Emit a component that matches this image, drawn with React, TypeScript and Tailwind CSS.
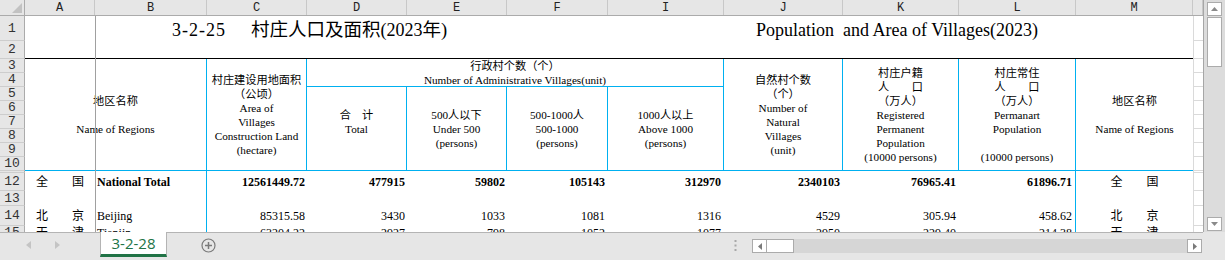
import React from "react";

const cols =
  "grid grid-cols-[25px_70px_112px_100px_100px_100px_101px_116px_119px_116px_117px_117px_10px]";
const serif = "font-['Liberation_Serif','Noto_Sans_CJK_SC',serif]";
const mono = "font-['Liberation_Mono','Noto_Sans_CJK_SC',monospace]";

function RowNum({ n, className = "" }: { n?: string; className?: string }) {
  return (
    <div
      className={`flex items-center justify-center bg-[#e6e6e6] border-r border-b border-r-[#ababab] border-b-[#cdcdcd] ${mono} text-[13px] leading-none text-[#333] overflow-hidden ${className}`}
    >
      {n}
    </div>
  );
}

function NCell({ className = "" }: { className?: string }) {
  return <div className={`border-l border-b border-[#dadada] ${className}`} />;
}

function Lines({ items }: { items: string[] }) {
  return (
    <>
      {items.map((t, i) => (
        <div key={i} className="h-[14px] leading-[14px] whitespace-pre">
          {t}
        </div>
      ))}
    </>
  );
}

const letters = ["A", "B", "C", "D", "E", "F", "I", "J", "K", "L", "M", ""];

function ColumnHeader() {
  return (
    <div className={`${cols} h-[16px] bg-[#e6e6e6] border-b border-[#ababab]`}>
      <div className="flex items-end justify-end pr-[2px] pb-[2px] border-r border-[#ababab]">
        <svg width="10" height="10">
          <polygon points="10,0 10,10 0,10" fill="#c2c2c2" />
        </svg>
      </div>
      {letters.map((l, i) => (
        <div
          key={i}
          className={`flex items-center justify-center border-r border-[#c8c8c8] ${mono} text-[12px] leading-none text-[#222]`}
        >
          {l}
        </div>
      ))}
    </div>
  );
}

function TitleRows() {
  return (
    <div className={`${cols} grid-rows-[25px_18px]`}>
      <RowNum n="1" className="col-start-1 row-start-1" />
      <RowNum n="2" className="col-start-1 row-start-2" />
      <div className="col-start-2 row-start-1 row-span-2 border-b border-black" />
      <div className="col-start-3 col-span-6 row-start-1 row-span-2 border-b border-black pl-[77px] pt-[3px] whitespace-nowrap flex items-baseline leading-[22px] text-black">
        <span className="font-['Liberation_Serif',serif] text-[18px] tracking-[1px]">3-2-25</span>
        <span className={`${serif} text-[18.5px] ml-[25px]`}>村庄人口及面积</span>
        <span className={`${serif} text-[18px]`}>(2023</span>
        <span className={`${serif} text-[18.5px]`}>年)</span>
      </div>
      <div className="col-start-9 col-span-4 row-start-1 row-span-2 border-b border-black pl-[32px] pt-[3px] whitespace-pre font-['Liberation_Serif',serif] text-[18px] leading-[22px] text-black">
        Population  and Area of Villages(2023)
      </div>
      <NCell className="col-start-13 row-start-1" />
      <NCell className="col-start-13 row-start-2" />
    </div>
  );
}

const hc = `flex flex-col items-center justify-center text-center ${serif} text-[11.2px] text-black border-b border-[#00b0f0]`;

function HeaderRows() {
  const nums = ["3", "4", "5", "6", "7", "8", "9", "10"];
  const rowStarts = [
    "row-start-1",
    "row-start-2",
    "row-start-3",
    "row-start-4",
    "row-start-5",
    "row-start-6",
    "row-start-7",
    "row-start-8",
  ];
  return (
    <div className={`${cols} grid-rows-[repeat(8,14px)]`}>
      {nums.map((n, i) => (
        <RowNum key={n} n={n} className={`col-start-1 ${rowStarts[i]}`} />
      ))}
      <div className={`${hc} col-start-2 col-span-2 row-start-1 row-span-8 border-r border-r-[#00b0f0]`}>
        <Lines items={["地区名称", "", "Name of Regions"]} />
      </div>
      <div className={`${hc} col-start-4 row-start-1 row-span-8 border-r border-r-[#00b0f0]`}>
        <Lines items={["村庄建设用地面积", "（公顷）", "Area of", "Villages", "Construction Land", "(hectare)"]} />
      </div>
      <div className={`${hc} col-start-5 col-span-4 row-start-1 row-span-2 border-r border-r-[#00b0f0]`}>
        <Lines items={["行政村个数（个）", "Number of Administrative Villages(unit)"]} />
      </div>
      <div className={`${hc} col-start-5 row-start-3 row-span-6 border-r border-r-[#00b0f0]`}>
        <Lines items={["合　计", "Total", ""]} />
      </div>
      <div className={`${hc} col-start-6 row-start-3 row-span-6 border-r border-r-[#00b0f0]`}>
        <Lines items={["500人以下", "Under 500", "(persons)"]} />
      </div>
      <div className={`${hc} col-start-7 row-start-3 row-span-6 border-r border-r-[#00b0f0]`}>
        <Lines items={["500-1000人", "500-1000", "(persons)"]} />
      </div>
      <div className={`${hc} col-start-8 row-start-3 row-span-6 border-r border-r-[#00b0f0]`}>
        <Lines items={["1000人以上", "Above 1000", "(persons)"]} />
      </div>
      <div className={`${hc} col-start-9 row-start-1 row-span-8 border-r border-r-[#00b0f0]`}>
        <Lines items={["自然村个数", "（个）", "Number of", "Natural", "Villages", "(unit)"]} />
      </div>
      <div className={`${hc} col-start-10 row-start-1 row-span-8 border-r border-r-[#00b0f0]`}>
        <Lines items={["村庄户籍", "人　　口", "（万人）", "Registered", "Permanent", "Population", "(10000 persons)"]} />
      </div>
      <div className={`${hc} col-start-11 row-start-1 row-span-8 border-r border-r-[#00b0f0]`}>
        <Lines items={["村庄常住", "人　　口", "（万人）", "Permanart", "Population", "", "(10000 persons)"]} />
      </div>
      <div className={`${hc} col-start-12 row-start-1 row-span-8`}>
        <Lines items={["地区名称", "", "Name of Regions"]} />
      </div>
      {rowStarts.map((r) => (
        <NCell key={r} className={`col-start-13 ${r}`} />
      ))}
    </div>
  );
}

const bodyCol = [
  "justify-center",
  "justify-start pl-[2px] border-r border-[#00b0f0]",
  "justify-end pr-[2px]",
  "justify-end pr-[2px]",
  "justify-end pr-[2px]",
  "justify-end pr-[3px]",
  "justify-end pr-[3px]",
  "justify-end pr-[3px]",
  "justify-end pr-[3px]",
  "justify-end pr-[3px] border-r border-[#00b0f0]",
  "justify-center",
];

function BodyRow({
  n,
  h,
  cells,
  bold = false,
}: {
  n?: string;
  h: string;
  cells: string[];
  bold?: boolean;
}) {
  return (
    <div className={`${cols} ${h}`}>
      <RowNum n={n} />
      {bodyCol.map((c, i) => (
        <div
          key={i}
          className={`flex items-center whitespace-pre ${serif} text-[12px] leading-[14px] text-black ${
            bold && i > 0 && i < 10 ? "font-bold" : ""
          } ${c}`}
        >
          {cells[i] || ""}
        </div>
      ))}
      <NCell />
    </div>
  );
}

function VScroll() {
  return (
    <div className="w-[22px] h-[232px] bg-[#dcdcdc] border-l border-[#a6a6a6] flex flex-col items-center pt-[2px] pb-[1px]">
      <div className="w-[15px] h-[14px] bg-white border border-[#ababab] flex items-center justify-center">
        <svg width="7" height="4">
          <polygon points="3.5,0 7,4 0,4" fill="#8a8a8a" />
        </svg>
      </div>
      <div className="w-[15px] h-[50px] mt-[1px] bg-white border border-[#ababab]" />
      <div className="flex-1" />
      <div className="w-[15px] h-[14px] bg-white border border-[#ababab] flex items-center justify-center">
        <svg width="7" height="4">
          <polygon points="0,0 7,0 3.5,4" fill="#8a8a8a" />
        </svg>
      </div>
    </div>
  );
}

function TabBar() {
  return (
    <div className="h-[28px] flex">
      <div className="w-[1203px] h-full border-t border-[#b4b4b4] flex items-start">
        <svg className="ml-[26px] mt-[8px]" width="5" height="8">
          <polygon points="5,0 0,4 5,8" fill="#c4c4c4" />
        </svg>
        <svg className="ml-[24px] mt-[8px]" width="5" height="8">
          <polygon points="0,0 5,4 0,8" fill="#c4c4c4" />
        </svg>
        <div className="ml-[40px] -mt-px w-[67px] h-[25px] bg-white border-x border-[#b4b4b4] border-b-[3px] border-b-[#217346] flex items-center justify-center pt-[1px] font-['Open_Sans','Noto_Sans',sans-serif] text-[15px] text-[#217346]">
          3-2-28
        </div>
        <svg className="ml-[34px] mt-[5px]" width="15" height="15" viewBox="0 0 15 15">
          <circle cx="7.5" cy="7.5" r="6.5" fill="none" stroke="#7a7a7a" strokeWidth="1.2" />
          <line x1="7.5" y1="4" x2="7.5" y2="11" stroke="#7a7a7a" strokeWidth="1.5" />
          <line x1="4" y1="7.5" x2="11" y2="7.5" stroke="#7a7a7a" strokeWidth="1.5" />
        </svg>
        <svg className="ml-[518px] mt-[7px]" width="3" height="11">
          <rect x="0.5" y="0" width="2" height="2" fill="#a8a8a8" />
          <rect x="0.5" y="4.5" width="2" height="2" fill="#a8a8a8" />
          <rect x="0.5" y="9" width="2" height="2" fill="#a8a8a8" />
        </svg>
        <div className="ml-[15px] mt-[6px] w-[450px] h-[14px] bg-[#d6d6d6] flex">
          <div className="w-[15px] h-[14px] bg-white border border-[#ababab] flex items-center justify-center">
            <svg width="4" height="7">
              <polygon points="4,0 0,3.5 4,7" fill="#7a7a7a" />
            </svg>
          </div>
          <div className="w-[28px] h-[14px] bg-white border border-[#ababab] -ml-px" />
          <div className="flex-1" />
          <div className="w-[15px] h-[14px] bg-white border border-[#ababab] flex items-center justify-center">
            <svg width="4" height="7">
              <polygon points="0,0 4,3.5 0,7" fill="#7a7a7a" />
            </svg>
          </div>
        </div>
      </div>
    </div>
  );
}

export default function App() {
  return (
    <div className="w-[1225px] h-[260px] overflow-hidden bg-[#e6e6e6] flex flex-col">
      <div className="flex h-[232px]">
        <div className="relative w-[1203px] h-[232px] overflow-hidden bg-white">
          <ColumnHeader />
          <TitleRows />
          <HeaderRows />
          <BodyRow h="h-[2px]" cells={[]} />
          <BodyRow
            n="12"
            h="h-[18px]"
            bold
            cells={[
              "全　　国",
              "National Total",
              "12561449.72",
              "477915",
              "59802",
              "105143",
              "312970",
              "2340103",
              "76965.41",
              "61896.71",
              "全　　国",
            ]}
          />
          <BodyRow n="13" h="h-[15px]" cells={[]} />
          <BodyRow
            n="14"
            h="h-[20px]"
            cells={[
              "北　　京",
              "Beijing",
              "85315.58",
              "3430",
              "1033",
              "1081",
              "1316",
              "4529",
              "305.94",
              "458.62",
              "北　　京",
            ]}
          />
          <BodyRow
            n="15"
            h="h-[14px]"
            cells={[
              "天　　津",
              "Tianjin",
              "63204.22",
              "2927",
              "798",
              "1052",
              "1077",
              "2950",
              "229.40",
              "214.38",
              "天　　津",
            ]}
          />
          <div className="absolute left-[95px] top-[16px] w-px h-[216px] bg-[#a0a0a0]" />
        </div>
        <VScroll />
      </div>
      <TabBar />
    </div>
  );
}
